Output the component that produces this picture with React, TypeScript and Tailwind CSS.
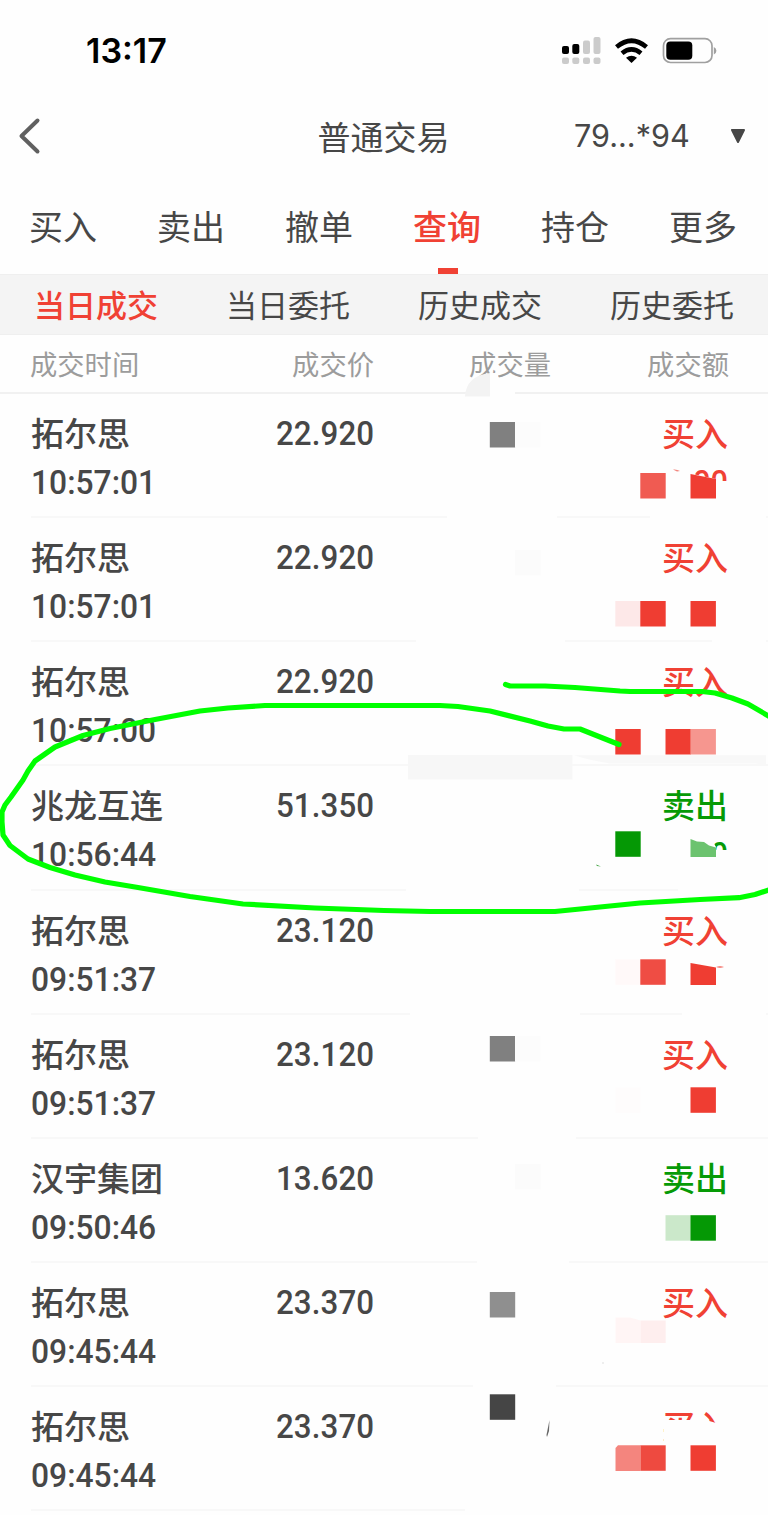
import { clsx } from "clsx";

type Side = "buy" | "sell";
type Deal = { name: string; time: string; price: string; side: Side };

const TABS = ["买入", "卖出", "撤单", "查询", "持仓", "更多"];
const SUB_TABS = ["当日成交", "当日委托", "历史成交", "历史委托"];

const DEALS: Deal[] = [
  { name: "拓尔思", time: "10:57:01", price: "22.920", side: "buy" },
  { name: "拓尔思", time: "10:57:01", price: "22.920", side: "buy" },
  { name: "拓尔思", time: "10:57:00", price: "22.920", side: "buy" },
  { name: "兆龙互连", time: "10:56:44", price: "51.350", side: "sell" },
  { name: "拓尔思", time: "09:51:37", price: "23.120", side: "buy" },
  { name: "拓尔思", time: "09:51:37", price: "23.120", side: "buy" },
  { name: "汉宇集团", time: "09:50:46", price: "13.620", side: "sell" },
  { name: "拓尔思", time: "09:45:44", price: "23.370", side: "buy" },
  { name: "拓尔思", time: "09:45:44", price: "23.370", side: "buy" },
];

// x, y, fill of each mosaic cell
const CELLS: [number, number, string][] = [
  [489.8, 422, "#808080"], [515, 422, "#fcfcfc"],
  [640.3, 473, "#f05b52"],
  [515, 550, "#fbfbfb"],
  [615.3, 601, "#fde8e8"], [640.3, 601, "#ef3d32"], [690.5, 601, "#ef3d32"],
  [615.3, 729, "#ef3d32"], [665.5, 729, "#ef3d32"], [690.5, 729, "#f6968f"],
  [615.3, 831.3, "#059805"],
  [615.3, 959.3, "#fff9f9"], [640.3, 959.3, "#ef4d44"],
  [489.8, 1036, "#808080"], [515, 1036, "#fcfcfc"],
  [615.3, 1087.3, "#fefcfc"], [690.5, 1087.3, "#ef3d32"],
  [515, 1164, "#fbfbfb"],
  [665.5, 1215.2, "#cbe8ca"], [690.5, 1215.2, "#059805"],
  [489.8, 1292, "#8f8f8f"],
  [489.8, 1394.3, "#454545"],
  [640.3, 1445.3, "#ee4a40"], [690.5, 1445.3, "#ef3d32"],
];

// x start, x end, y of the divider parts that were wiped out
const WIPES: [number, number, number][] = [
  [490, 515, 393],
  [447, 557, 517], [650, 766, 517],
  [416, 565, 641], [712, 766, 641],
  [406, 579, 890], [678, 768, 890],
  [410, 580, 1014], [682, 766, 1014],
  [478, 576, 1138],
  [477, 569, 1262],
  [473, 556, 1386],
  [465, 768, 1510],
];

export default function App() {
  return (
    <div className="relative h-[1515px] w-[768px] overflow-hidden bg-[#fefefe] font-['Noto_Sans_CJK_SC',sans-serif] text-[#474747]">
      <StatusBar />
      <NavBar />
      <div className="grid h-[92px] grid-cols-6">
        {TABS.map((t) => (
          <div
            key={t}
            className={clsx("flex flex-col items-center justify-between text-[34px] leading-[88px]", t === "查询" && "font-medium text-[#f04134]")}
          >
            <span className="h-[86px] pr-0.5">{t}</span>
            {t === "查询" && <span className="h-1.5 w-5 bg-[#f04134]" />}
          </div>
        ))}
      </div>
      <div className="grid h-[61px] grid-cols-4 border-y border-[#efefef] bg-[#f4f4f4]">
        {SUB_TABS.map((t, i) => (
          <div key={t} className={clsx("text-center text-[31px] leading-[57px]", i === 0 && "font-medium text-[#f04134]")}>
            {t}
          </div>
        ))}
      </div>
      <div className="grid h-[59px] grid-cols-[200px_174px_177px_178px] border-b-2 border-[#f1f1f1] text-right text-[27.3px] leading-[56px] text-[#9c9c9c]">
        <span className="pl-[30px] text-left">成交时间</span>
        <span>成交价</span>
        <span>成交量</span>
        <span>成交额</span>
      </div>
      {DEALS.map((d, i) => <DealRow key={i} deal={d} />)}
      <Markup />
    </div>
  );
}

function DealRow({ deal }: { deal: Deal }) {
  return (
    <div className="ml-[31px] h-[124.15px] border-b-2 border-[#f8f8f8] pt-[15px]">
      <div className="flex h-12 items-start font-medium">
        <span className="w-[245px] text-[33px] leading-[46px]">{deal.name}</span>
        <span className="w-[100px] origin-left scale-x-[0.92] font-['Roboto',sans-serif] text-[34px] leading-[48px] tracking-[0.1px]">{deal.price}</span>
        <span className={clsx("ml-auto mr-10 text-[33px] leading-[46px]", deal.side === "buy" ? "text-[#f04134]" : "text-[#069a06]")}>
          {deal.side === "buy" ? "买入" : "卖出"}
        </span>
      </div>
      <div className="w-fit origin-left scale-x-[0.935] font-['Roboto',sans-serif] text-[34px] font-medium leading-[50px]">{deal.time}</div>
    </div>
  );
}

function StatusBar() {
  return (
    <div className="flex h-[90px] items-center pl-[86px] pt-3">
      <span className="font-['Inter',sans-serif] text-[34px] font-semibold leading-none text-black">13:17</span>
      <svg className="ml-auto mr-[50px]" width="158" height="30" viewBox="560 36 158 30">
        <g fill="#000">
          <rect x="562" y="46" width="7" height="8" rx="2" />
          <rect x="572.3" y="44" width="7" height="10" rx="2" />
        </g>
        <g fill="#cbcbcb">
          <rect x="583" y="40.5" width="7" height="13.5" rx="2" />
          <rect x="593.5" y="37" width="7" height="17" rx="2" />
          <rect x="562" y="57.5" width="7" height="6.5" rx="2" />
          <rect x="572.3" y="57.5" width="7" height="6.5" rx="2" />
          <rect x="583" y="57.5" width="7" height="6.5" rx="2" />
          <rect x="593.5" y="57.5" width="7" height="6.5" rx="2" />
        </g>
        <g fill="none" stroke="#000" strokeWidth="4.6">
          <path d="M616.5 47Q631.5 34.5 646.5 47" />
          <path d="M622 53.2Q631.5 45.5 641 53.2" />
        </g>
        <path d="M626 57.8Q631.5 53.5 637 57.8L631.5 63Z" />
        <rect x="663.5" y="38.7" width="48.5" height="23.8" rx="7" fill="none" stroke="#a0a0a0" strokeWidth="1.7" />
        <rect x="666.3" y="41.5" width="26" height="18.3" rx="4" />
        <path d="M713.8 47q2.6 1 2.6 3.7t-2.6 3.7z" fill="#a0a0a0" />
      </svg>
    </div>
  );
}

function NavBar() {
  return (
    <div className="grid h-[92px] grid-cols-[200px_367px_201px] items-center">
      <svg className="ml-[18px]" width="24" height="38" viewBox="0 0 24 38" fill="none" stroke="#606060" strokeWidth="4" strokeLinecap="round" strokeLinejoin="round">
        <path d="M19.5 3.5 3.5 19 19.5 34.5" />
      </svg>
      <h1 className="text-center text-[33px] leading-[90px]">普通交易</h1>
      <div className="flex items-center">
        <span className="ml-[7px] w-[115px] whitespace-nowrap font-['Inter',sans-serif] text-[30.6px] leading-none">79...*94</span>
        <svg className="ml-[41px]" width="16" height="16" viewBox="0 0 16 16">
          <path d="M2 2h12L8 14z" fill="#474747" stroke="#474747" strokeWidth="2" strokeLinejoin="round" />
        </svg>
      </div>
    </div>
  );
}

/* Mosaic blocks, wiped areas and the hand-drawn green circle on top of the list */
function Markup() {
  return (
    <svg className="pointer-events-none absolute left-0 top-0" width="768" height="1515" viewBox="0 0 768 1515" fill="none">
      <defs>
        <clipPath id="first-tail"><path d="M690 466H728V481H716V479L690 473.5Z" /></clipPath>
        <clipPath id="sell-tail"><path d="M713 842H728V850H716V847Z" /></clipPath>
      </defs>

      {WIPES.map(([x1, x2, y], i) => <rect key={i} x={x1} y={y - 2} width={x2 - x1} height="5" fill="#fefefe" />)}
      <path d="M465 396.5Q466 376 490 373V396.5Z" fill="#f3f3f3" />
      <path d="M490 373h8v12h-8z" fill="#fefefe" />
      <path d="M664 1420H706L716 1423V1418L730 1414V1446H664Z" fill="#fefefe" />

      {CELLS.map(([x, y, fill], i) => <rect key={i} x={x} y={y} width="25.4" height="25.5" fill={fill} />)}

      <path d="M690.5 474 716 479V498.500H690.5Z" fill="#ef3d32" />
      <path d="M673 469.5q4-.5 7 1.5l-3 .5z" fill="#f2857d" />
      <text x="693" y="494" clipPath="url(#first-tail)" className="font-['Roboto',sans-serif] text-[33px] font-medium" textLength="35" lengthAdjust="spacingAndGlyphs" fill="#f04134">00</text>

      <path d="M408 755H572.5V779.5H408Z" fill="#f7f7f7" />
      <path d="M574 755.3H766V765L755 763.5H610Q590 760.5 574 755.3Z" fill="#f8f8f8" />

      <path d="M690.5 839 697 841.5 704 842 709 845.5 716 847.5V857H690.5Z" fill="#6cc36f" />
      <path d="M596 864.5 601 866.5 597 866Z" fill="#3ba03b" />
      <text x="711" y="866" clipPath="url(#sell-tail)" className="font-['Roboto',sans-serif] text-[33px] font-medium" textLength="17" lengthAdjust="spacingAndGlyphs" fill="#069a06">0</text>

      <path d="M690.5 963 716 967.5V985H690.5Z" fill="#ef3d32" />
      <path d="M716 967q4-1.5 8 0-4 1.5-8 0Z" fill="#f2635a" />

      <path d="M615.5 1317.5H630L640.5 1320.5V1343H615.5Z" fill="#fff5f5" />
      <path d="M640.5 1320.5H665.7V1343H640.5Z" fill="#feeeee" />
      <path d="M602 1362.5h2v1h-2z" fill="#ddd" />
      <path d="M618 1445.3H640.5V1471H615.5V1448Z" fill="#f4857e" />
      <path d="M549.5 1420 549 1431 547 1437 546.5 1435Z" fill="#666" />

      <g stroke="#00ff00" strokeWidth="5.2" strokeLinecap="round" strokeLinejoin="round">
        <path d="M505.5 684.5 510 686H545L575 687.5 620 691 630 691.5H702L715 693 732 698 748 704 772 718" />
        <path d="M772 889 755 894.500 739 897.7 700 899.5 640 903 555 911.5H430L384 910.5 315 908 243 904 190 896.5 138 887.5 105 882 75 875 50 867.5 28 859 10 845.5 3 835 2 822V812L5 805 11 797 23 780 28 771 35 761 55 747 83 735.5 110 728.5 155 719.5 200 711 228 708 265 705.5H440L458 706.5 490 711 530 721 548 726 564 729H580L619 744.5" />
      </g>
    </svg>
  );
}
